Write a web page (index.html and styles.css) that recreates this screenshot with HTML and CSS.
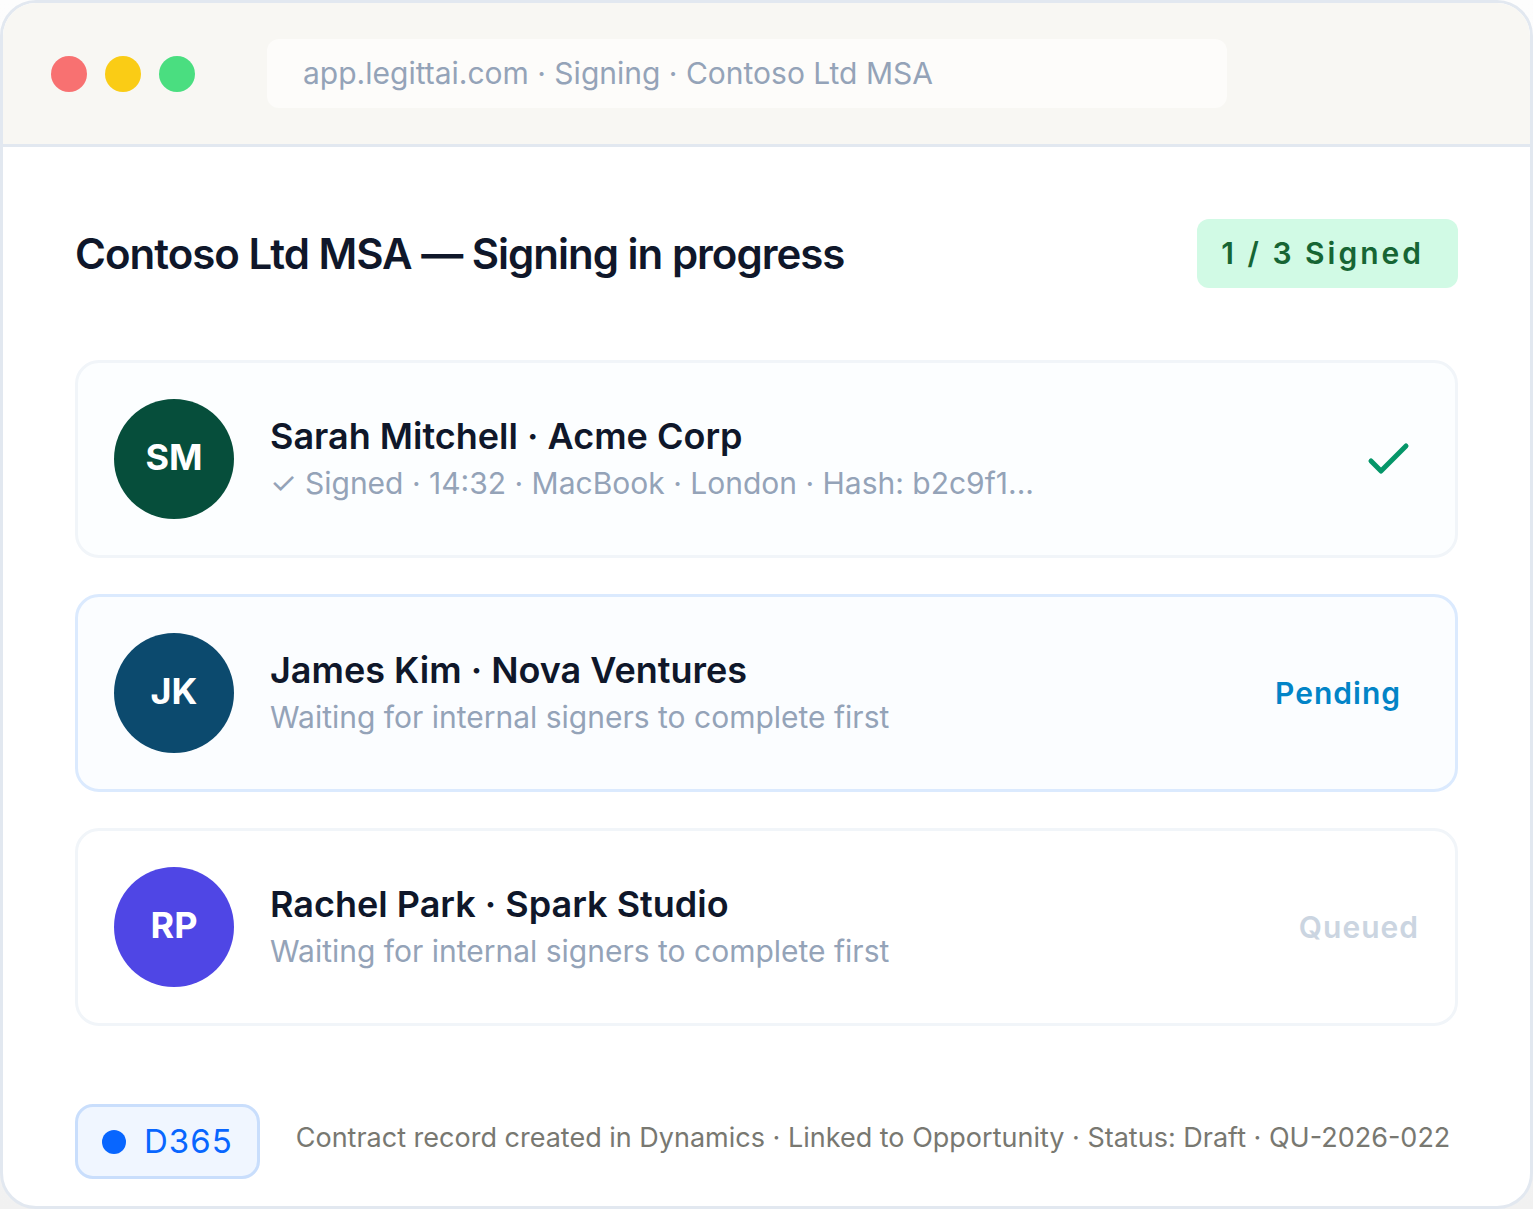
FILE: index.html
```html
<!DOCTYPE html>
<html lang="en">
<head>
  <meta charset="UTF-8" />
  <meta name="viewport" content="width=device-width, initial-scale=1.0"/>
  <title>Contoso Ltd MSA</title>
  <link rel="stylesheet" href="styles.css">
</head>
<body>
  <div class="window">
    <header class="titlebar">
      <div class="dots">
        <span class="dot red"></span>
        <span class="dot yellow"></span>
        <span class="dot green"></span>
      </div>
      <div class="address">app.legittai.com · Signing · Contoso Ltd MSA</div>
    </header>

    <main class="content">
      <div class="heading">
        <h1>Contoso Ltd MSA — Signing in progress</h1>
        <span class="badge">1 / 3 Signed</span>
      </div>

      <ul class="signers">
        <li class="signer signed">
          <span class="avatar avatar-sm">SM</span>
          <div class="info">
            <h2>Sarah Mitchell · Acme Corp</h2>
            <p>✓ Signed · 14:32 · MacBook · London · Hash: b2c9f1...</p>
          </div>
          <svg class="check" viewBox="0 0 48 48" role="img" aria-label="Signed">
            <path d="M6 26 L16 36 L41 11" />
          </svg>
        </li>
        <li class="signer active">
          <span class="avatar avatar-jk">JK</span>
          <div class="info">
            <h2>James Kim · Nova Ventures</h2>
            <p>Waiting for internal signers to complete first</p>
          </div>
          <span class="status pending">Pending</span>
        </li>
        <li class="signer">
          <span class="avatar avatar-rp">RP</span>
          <div class="info">
            <h2>Rachel Park · Spark Studio</h2>
            <p>Waiting for internal signers to complete first</p>
          </div>
          <span class="status queued">Queued</span>
        </li>
      </ul>

      <footer class="record">
        <span class="chip"><span class="chip-dot"></span>D365</span>
        <p>Contract record created in Dynamics · Linked to Opportunity · Status: Draft · QU-2026-022</p>
      </footer>
    </main>
  </div>
</body>
</html>
```
FILE: styles.css
```css
* {
  box-sizing: border-box;
}

body {
  margin: 0;
  background: linear-gradient(#fdfdfd, #f1f1f1);
  font-family: 'Inter', sans-serif;
  color: #0f172a;
}

h1, h2, p, ul {
  margin: 0;
  padding: 0;
}

.window {
  min-height: 100vh;
  background: #fff;
  border: 3px solid #e2e8f0;
  border-radius: 36px;
  overflow: hidden;
}

.titlebar {
  display: flex;
  align-items: center;
  gap: 72px;
  padding: 36px 48px;
  background: #f8f7f3;
  border-bottom: 3px solid #e2e8f0;
}

.dots {
  display: flex;
  gap: 18px;
}

.dot {
  width: 36px;
  height: 36px;
  border-radius: 50%;
}

.red {
  background: #f87171;
}

.yellow {
  background: #facc15;
}

.green {
  background: #4ade80;
}

.address {
  flex: 1;
  max-width: 960px;
  padding: 16px 36px;
  background: #fdfcfa;
  border-radius: 12px;
  color: #94a3b8;
  font-size: 30px;
  line-height: 37px;
}

.content {
  padding: 72px;
  padding-bottom: 27px;
}

.heading {
  display: flex;
  justify-content: space-between;
  align-items: center;
  margin-bottom: 72px;
}

.heading h1 {
  font-size: 42px;
  font-weight: 600;
  line-height: 51px;
  letter-spacing: -1px;
}

.badge {
  padding: 16px 34px 16px 24px;
  background: #d1fae5;
  border-radius: 12px;
  color: #166534;
  font-size: 30px;
  font-weight: 600;
  line-height: 37px;
  letter-spacing: 3px;
}

.signers {
  display: flex;
  flex-direction: column;
  gap: 36px;
  list-style: none;
}

.signer {
  display: flex;
  align-items: center;
  gap: 36px;
  padding: 36px;
  border: 3px solid #f1f5f9;
  border-radius: 24px;
}

.signed {
  background: #fcfeff;
}

.active {
  background: #fbfdff;
  border-color: #dbeafe;
}

.avatar {
  width: 120px;
  height: 120px;
  border-radius: 50%;
  color: #fff;
  font-size: 36px;
  font-weight: 700;
  line-height: 116px;
  text-align: center;
}

.avatar-sm {
  background: #064e3b;
}

.avatar-jk {
  background: #0c4a6e;
}

.avatar-rp {
  background: #4f46e5;
}

.info {
  flex: 1;
}

.info h2 {
  font-size: 36px;
  font-weight: 600;
  line-height: 48px;
}

.info p {
  color: #94a3b8;
  font-size: 30px;
  line-height: 46px;
}

.check {
  width: 48px;
  height: 48px;
  margin-right: 6px;
  fill: none;
  stroke: #059669;
  stroke-width: 5;
  stroke-linecap: round;
  stroke-linejoin: round;
}

.status {
  font-size: 30px;
  font-weight: 600;
  letter-spacing: 1px;
}

.pending {
  padding-right: 18px;
  color: #0284c7;
}

.queued {
  color: #cbd5e1;
}

.record {
  display: flex;
  gap: 36px;
  margin-top: 78px;
}

.chip {
  display: flex;
  align-items: center;
  gap: 18px;
  padding: 15px 24px;
  background: #f0f6ff;
  border: 3px solid #c9defc;
  border-radius: 18px;
  color: #0866ff;
  font-size: 33px;
  line-height: 39px;
  letter-spacing: 1px;
}

.chip-dot {
  width: 24px;
  height: 24px;
  background: #0866ff;
  border-radius: 50%;
}

.record p {
  color: #787871;
  font-size: 27px;
  line-height: 68px;
}
```
